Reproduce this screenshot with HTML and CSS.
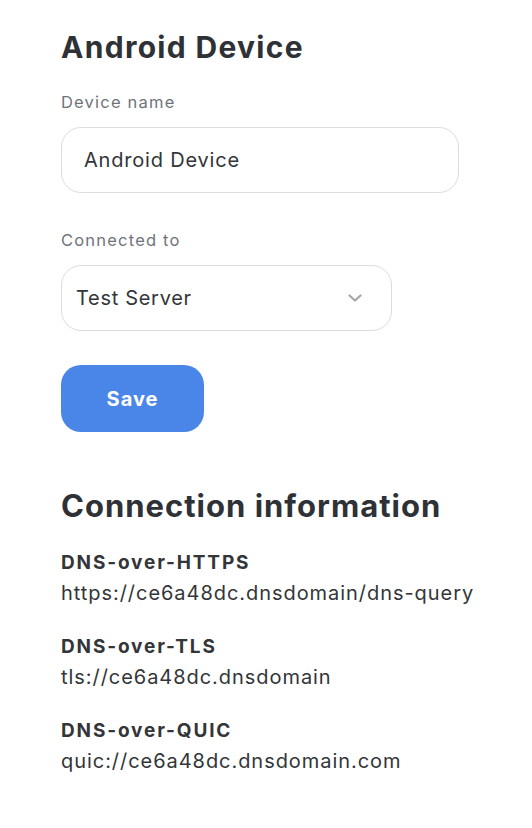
FILE: index.html
```html
<!DOCTYPE html>
<html lang="en">
<head>
  <meta charset="UTF-8" />
  <meta name="viewport" content="width=device-width, initial-scale=1.0"/>
  <title>Android Device</title>
  <link rel="stylesheet" href="styles.css">
</head>
<body>

  <main class="page">
    <h1>Android Device</h1>

    <form class="device-form">
      <label class="field">
        <span class="field-label">Device name</span>
        <input class="text-input" type="text" value="Android Device">
      </label>

      <label class="field">
        <span class="field-label">Connected to</span>
        <span class="select">
          <span class="select-value">Test Server</span>
          <svg class="chevron" width="14" height="8" viewBox="0 0 14 8">
            <path d="M1.5 1.5 L7 6.5 L12.5 1.5" fill="none" stroke="#a3a7ad" stroke-width="2.2" stroke-linecap="round" stroke-linejoin="round"/>
          </svg>
        </span>
      </label>

      <button class="save-btn" type="button">Save</button>
    </form>

    <h2>Connection information</h2>

    <div class="conn-list">
      <div class="conn-item">
        <div class="conn-title">DNS-over-HTTPS</div>
        <div class="conn-url">https://ce6a48dc.dnsdomain/dns-query</div>
      </div>
      <div class="conn-item">
        <div class="conn-title">DNS-over-TLS</div>
        <div class="conn-url">tls://ce6a48dc.dnsdomain</div>
      </div>
      <div class="conn-item">
        <div class="conn-title">DNS-over-QUIC</div>
        <div class="conn-url">quic://ce6a48dc.dnsdomain.com</div>
      </div>
    </div>
  </main>

</body>
</html>
```

FILE: styles.css
```css
body {
  margin: 0;
  background-color: #ffffff;
  font-family: 'Inter', 'Noto Sans', sans-serif;
  color: #333538;
}

.page {
  padding: 30px 0 40px 61px;
}

h1 {
  margin: 0;
  font-size: 30px;
  line-height: 34px;
  font-weight: 700;
  letter-spacing: 1.3px;
  color: #2e3135;
}

.device-form {
  display: flex;
  flex-direction: column;
  align-items: flex-start;
}

.field {
  display: flex;
  flex-direction: column;
  gap: 15px;
  margin-top: 28px;
}

.field + .field {
  margin-top: 37px;
}

.field-label {
  font-size: 16.5px;
  line-height: 20px;
  letter-spacing: 1.2px;
  color: #6f747a;
}

.text-input {
  box-sizing: border-box;
  width: 398px;
  height: 66px;
  padding: 0 22px;
  border: 1px solid #dcdde0;
  border-radius: 20px;
  font-family: inherit;
  font-size: 20px;
  letter-spacing: 0.8px;
  color: #333538;
  background: #fff;
  outline: none;
}

.select {
  box-sizing: border-box;
  display: flex;
  align-items: center;
  justify-content: space-between;
  width: 331px;
  height: 66px;
  padding: 0 29px 0 14px;
  border: 1px solid #dcdde0;
  border-radius: 20px;
  font-size: 20px;
  letter-spacing: 0.7px;
  color: #333538;
}

.save-btn {
  margin-top: 34px;
  width: 143px;
  height: 67px;
  border: none;
  border-radius: 20px;
  background-color: #4a86e8;
  color: #ffffff;
  font-family: inherit;
  font-size: 20px;
  font-weight: 700;
  letter-spacing: 1px;
}

h2 {
  margin: 56px 0 0;
  font-size: 31px;
  line-height: 36px;
  font-weight: 700;
  letter-spacing: 1px;
  color: #2e3135;
}

.conn-list {
  margin-top: 24px;
  display: flex;
  flex-direction: column;
  gap: 24px;
}

.conn-title {
  font-size: 19px;
  line-height: 30px;
  font-weight: 700;
  letter-spacing: 1.85px;
  color: #333538;
}

.conn-url {
  font-size: 20px;
  line-height: 30px;
  letter-spacing: 0.95px;
  color: #333538;
}
```
